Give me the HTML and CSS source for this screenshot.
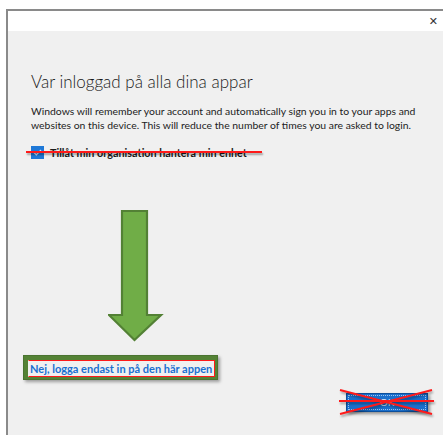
FILE: index.html
```html
<!DOCTYPE html>
<html lang="sv">
<head>
<meta charset="utf-8">
<title>Var inloggad på alla dina appar</title>
<link rel="stylesheet" href="styles.css">
</head>
<body>
<div class="window">
  <div class="titlebar">
    <span class="close">✕</span>
  </div>
  <div class="content">
    <h1 class="heading">Var inloggad på alla dina appar</h1>
    <p class="desc">Windows will remember your account and automatically sign you in to your apps and websites on this device. This will reduce the number of times you are asked to login.</p>
    <div class="check-row">
      <span class="checkbox">
        <svg width="13" height="13" viewBox="0 0 13 13"><path d="M3 6.5l2.3 2.3L10 4" fill="none" stroke="#cfe3fb" stroke-width="1.2"/></svg>
      </span>
      <span class="check-label">Tillåt min organisation hantera min enhet</span>
      <span class="strike"></span>
    </div>
    <div class="arrow">
      <svg width="56" height="134" viewBox="0 0 56 134">
        <path d="M14 2H39V106H53L26.5 131L1 106H14Z" fill="#70ad47" stroke="#538135" stroke-width="2.2" stroke-linejoin="miter"/>
      </svg>
    </div>
    <div class="link-box">
      <div class="link-inner">
        <a class="link" href="#">Nej, logga endast in på den här appen</a>
      </div>
    </div>
    <div class="footer">
      <div class="ok-wrap">
        <button class="ok">OK</button>
        <svg class="cross" width="96" height="28" viewBox="0 0 96 28">
          <path d="M2 2L94 26M2 26L94 2M1 13H96" stroke="#ff1a1a" stroke-width="2" fill="none"/>
        </svg>
      </div>
    </div>
  </div>
</div>
</body>
</html>
```

FILE: styles.css
```css
html, body {
  margin: 0;
  padding: 0;
  background: #ffffff;
  height: 100%;
  overflow: hidden;
}

body {
  font-family: Lato, "Noto Sans", sans-serif;
  color: #1a1a1a;
}

.window {
  margin: 9px 0 0 6px;
  border-top: 2px solid #8a8a8a;
  border-left: 2px solid #8a8a8a;
  height: calc(100% - 11px);
  display: flex;
  flex-direction: column;
  box-sizing: border-box;
}

.titlebar {
  height: 20px;
  background: #ffffff;
  display: flex;
  justify-content: flex-end;
  align-items: center;
  padding-right: 5px;
}

.close {
  font-size: 11px;
  color: #333;
  line-height: 1;
  font-family: "DejaVu Sans", sans-serif;
}

.content {
  flex: 1;
  background: #f0f0f0;
  padding: 40px 0 0 23px;
  display: flex;
  flex-direction: column;
}

.heading {
  margin: 0;
  font-family: Lato, "Open Sans", sans-serif;
  font-weight: 300;
  font-size: 17px;
  line-height: 22px;
  color: #1a1a1a;
}

.desc {
  margin: 12px 0 0;
  width: 392px;
  font-size: 10.4px;
  line-height: 13.5px;
  color: #222;
}

.check-row {
  position: relative;
  margin-top: 13px;
  display: flex;
  align-items: center;
  gap: 6px;
  height: 14px;
}

.checkbox {
  width: 13px;
  height: 13px;
  background: #1e78d7;
  display: flex;
}

.check-label {
  font-weight: 700;
  font-size: 10.8px;
  color: #1a1a1a;
}

.strike {
  position: absolute;
  left: -5px;
  top: 6px;
  width: 236px;
  height: 2px;
  background: #ff1a1a;
  box-shadow: 1px 2px 2px rgba(0, 0, 0, 0.35);
}

.arrow {
  margin: 50px 0 0 77px;
  height: 134px;
}

.link-box {
  margin: 12px 0 0 -8px;
  width: 195px;
  height: 25px;
  box-sizing: border-box;
  background: #548235;
  border: 1px solid #4a7430;
  padding: 4px 2px 2px 4px;
  box-shadow: 2px 2px 3px rgba(0, 0, 0, 0.35);
}

.link-inner {
  height: 100%;
  box-sizing: border-box;
  border: 1px solid #f0f0f0;
  border-right-color: #ff1a1a;
  border-bottom-color: #ff1a1a;
  border-top: 1px solid #ff1a1a;
  background: #f0f0f0;
  display: flex;
  align-items: center;
  padding-left: 1px;
}

.link {
  font-weight: 700;
  font-size: 11px;
  color: #1a6fd1;
  text-decoration: none;
  white-space: nowrap;
}

.footer {
  margin-top: 10px;
  display: flex;
  justify-content: flex-end;
  padding-right: 13px;
}

.ok-wrap {
  position: relative;
  width: 86px;
  height: 24px;
  display: flex;
  align-items: center;
  justify-content: center;
}

.ok {
  width: 82px;
  height: 19px;
  background: #1a6fcc;
  border: 1px solid #0c4f9c;
  outline: 1px dotted #9ec4ee;
  outline-offset: -3px;
  color: #dbe9f8;
  font-size: 10px;
  font-family: Lato, sans-serif;
  padding: 0;
  box-shadow: 2px 2px 3px rgba(0, 0, 0, 0.4);
}

.cross {
  position: absolute;
  left: -6px;
  top: -2px;
  filter: drop-shadow(1px 2px 1px rgba(0, 0, 0, 0.35));
}
```
